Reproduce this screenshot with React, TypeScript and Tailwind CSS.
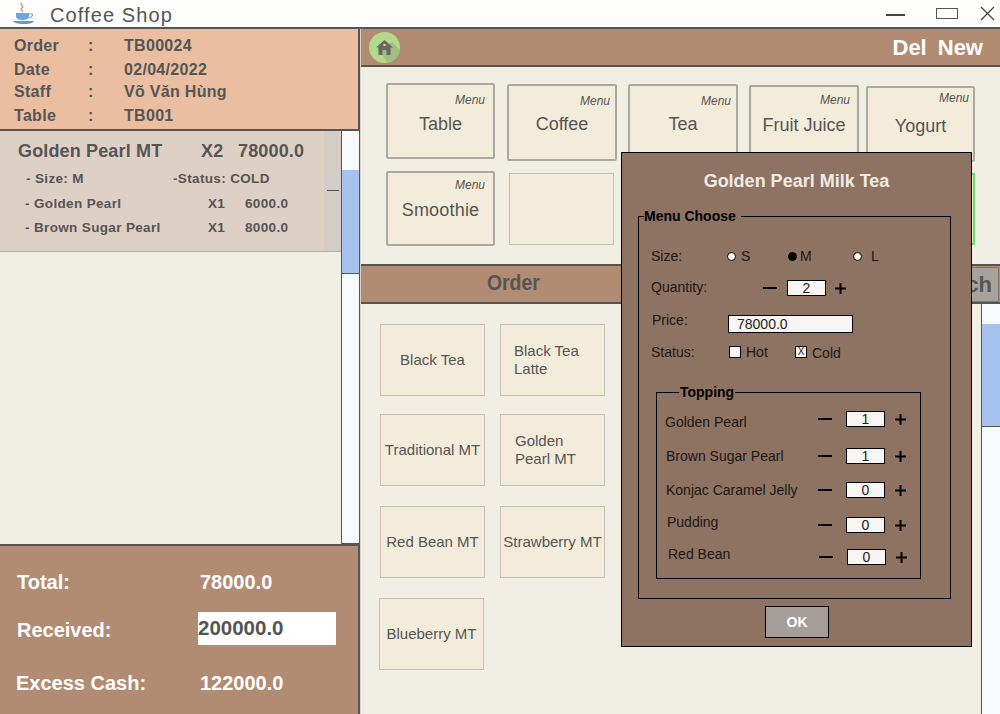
import React from "react";

const font = { fontFamily: '"Liberation Sans", Arial, sans-serif' };

const menuButtons = [
  { name: "Table", cls: "w-[109px] h-[76px] mt-0 ml-0", menu: "pt-[8px] pr-[8px]", text: "mt-[3px]" },
  { name: "Coffee", cls: "w-[110px] h-[77px] mt-[1px] ml-[12px]", menu: "pt-[8px] pr-[5px]", text: "mt-[2px]" },
  { name: "Tea", cls: "w-[110px] h-[77px] mt-[1px] ml-[11px]", menu: "pt-[8px] pr-[5px]", text: "mt-[2px]" },
  { name: "Fruit Juice", cls: "w-[110px] h-[77px] mt-[2px] ml-[11px]", menu: "pt-[6px] pr-[7px]", text: "mt-[4px]" },
  { name: "Yogurt", cls: "w-[109px] h-[76px] mt-[3px] ml-[7px]", menu: "pt-[3px] pr-[4px]", text: "mt-[7px]" },
];

const products = [
  [
    { a: "Black Tea", cls: "items-center justify-center" },
    { a: "Black Tea", b: "Latte", cls: "flex-col justify-center pl-[13px]" },
  ],
  [
    { a: "Traditional MT", cls: "items-center justify-center" },
    { a: "Golden", b: "Pearl MT", cls: "flex-col justify-center pl-[14px]" },
  ],
  [
    { a: "Red Bean MT", cls: "items-center justify-center" },
    { a: "Strawberry MT", cls: "items-center justify-center" },
  ],
];

const rowGaps = ["mt-[18px]", "mt-[20px]"];

const orderInfo = [
  { label: "Order", value: "TB00024", cls: "" },
  { label: "Date", value: "02/04/2022", cls: "mt-px" },
  { label: "Staff", value: "Võ Văn Hùng", cls: "-mt-px" },
  { label: "Table", value: "TB001", cls: "mt-px" },
];

const toppings = [
  { name: "Golden Pearl", qty: "1", cls: "mt-[11px]", label: "pl-[8px] mt-[6px]" },
  { name: "Brown Sugar Pearl", qty: "1", cls: "mt-[21px]", label: "pl-[9px]" },
  { name: "Konjac Caramel Jelly", qty: "0", cls: "mt-[18px]", label: "pl-[9px]" },
  { name: "Pudding", qty: "0", cls: "mt-[19px]", label: "pl-[10px] mb-[6px]" },
  { name: "Red Bean", qty: "0", cls: "mt-[16px] -mr-px", label: "pl-[11px] mb-[6px]" },
];

function CoffeeIcon() {
  return (
    <svg width="24" height="24" viewBox="0 0 24 24" className="ml-[11px] mt-[1px]">
      <path d="M11 1c-3 2 3 3 0 5s2 3 0 4" fill="none" stroke="#d9a0a0" strokeWidth="1.6" />
      <path d="M5 11h13v3c0 3-3 4-6.500 4S5 17 5 14z" fill="#6ea5de" />
      <path d="M18 12h3c1 0 1 3-3 4" fill="none" stroke="#6ea5de" strokeWidth="1.200" />
      <path d="M2 19h21c-1 2-4 3-10 3S3 21 2 19z" fill="#5a9ae0" />
    </svg>
  );
}

function HomeIcon() {
  return (
    <svg width="31" height="31" viewBox="0 0 31 31" className="ml-[8px]">
      <circle cx="15.500" cy="15.500" r="15.500" fill="#b5d98b" />
      <path d="M8 17l11 14a15.500 15.500 0 0 0 12-13L23 10z" fill="#a3bf80" />
      <path d="M15.500 8L7 15.500h2.500V23h4v-5h4v5h4v-7.500H24z" fill="#666666" />
      <circle cx="15.500" cy="13" r="1.300" fill="#f2d64b" />
    </svg>
  );
}

function Stepper({ value, inputGap = "ml-[14px]", plusGap = "ml-[9px]" }: { value: string; inputGap?: string; plusGap?: string }) {
  return (
    <div className="flex items-center">
      <div className="w-[14px] h-[2px] bg-black" />
      <div className={`w-[39px] h-[16px] ${inputGap} bg-[#f7f6f4] border border-black flex items-center justify-center text-[14px] text-[#222]`}>
        {value}
      </div>
      <svg width="13" height="13" viewBox="0 0 13 13" className={plusGap}>
        <path d="M6.500 1v11M1 6.500h11" stroke="#000" strokeWidth="2" />
      </svg>
    </div>
  );
}

function Radio({ label, on, gap, width }: { label: string; on?: boolean; gap: string; width: string }) {
  return (
    <div className={`flex items-center ${width}`}>
      <div className={`w-[9px] h-[9px] rounded-full border border-black ${on ? "bg-black" : "bg-white"}`} />
      <span className={gap}>{label}</span>
    </div>
  );
}

export default function App() {
  return (
    <div style={font} className="w-[1000px] h-[714px] overflow-hidden relative bg-[#f1efe4] flex flex-col text-[#555]">
      {/* title bar */}
      <div className="h-[27px] shrink-0 bg-[#fdfdfb] flex items-center">
        <CoffeeIcon />
        <span className="ml-[15px] mt-[3px] text-[20px] tracking-[1.1px] text-[#555]">Coffee Shop</span>
        <div className="ml-auto flex items-center">
          <div className="w-[19px] h-[2px] bg-[#444] mt-[3px]" />
          <div className="ml-[31px] w-[22px] h-[11px] border border-[#555]" />
          <svg width="15" height="15" viewBox="0 0 15 15" className="ml-[22px] mr-[5px]">
            <path d="M1 1l13 13M14 1L1 14" stroke="#444" strokeWidth="1.300" />
          </svg>
        </div>
      </div>

      <div className="flex flex-1 min-h-0 border-t-[2px] border-[#555]">
        {/* left column */}
        <div className="w-[360px] shrink-0 flex flex-col">
          <div className="h-[102px] shrink-0 bg-[#ecbea1] border-r-[2px] border-b-[2px] border-[#555] pl-[14px] pt-[5px] text-[16px] font-bold leading-[23px]">
            {orderInfo.map((r) => (
              <div key={r.label} className={`grid grid-cols-[74px_36px_1fr] tracking-[0.3px] ${r.cls}`}>
                <span>{r.label}</span>
                <span>:</span>
                <span>{r.value}</span>
              </div>
            ))}
          </div>

          <div className="flex-1 min-h-0 flex">
            <div className="w-[341px] h-full">
              <div className="h-[121px] bg-[#dfd0c5] border-b border-[#bdaea4] flex">
                <div className="w-[324px] font-bold">
                  <div className="flex text-[18px] pl-[18px] pt-[9px] leading-[22px] tracking-[0.15px]">
                    <span className="w-[183px]">Golden Pearl MT</span>
                    <span className="w-[37px]">X2</span>
                    <span>78000.0</span>
                  </div>
                  <div className="text-[13.500px] tracking-[0.35px] leading-[24.500px] mt-[5px]">
                    <div className="flex pl-[26px]">
                      <span className="w-[147px]">- Size: M</span>
                      <span>-Status: COLD</span>
                    </div>
                    <div className="flex pl-[25px]">
                      <span className="w-[183px]">- Golden Pearl</span>
                      <span className="w-[37px]">X1</span>
                      <span>6000.0</span>
                    </div>
                    <div className="flex pl-[25px]">
                      <span className="w-[183px]">- Brown Sugar Pearl</span>
                      <span className="w-[37px]">X1</span>
                      <span>8000.0</span>
                    </div>
                  </div>
                </div>
                <div className="w-[17px] bg-[#d5ccc5] flex justify-center pt-[59px]">
                  <div className="w-[12px] h-[1px] bg-[#555]" />
                </div>
              </div>
            </div>
            <div className="w-[19px] h-full bg-[#f7fafa] border-l border-r border-b border-[#555] pt-[39px]">
              <div className="h-[104px] bg-[#a6c3f0] border-b border-[#555]" />
            </div>
          </div>

          <div className="h-[170px] shrink-0 bg-[#b18b72] border-t-[2px] border-r-[2px] border-[#555] text-white font-bold text-[20px]">
            <div className="flex items-center pl-[17px] pt-[23px] h-[48px]">
              <span className="w-[183px]">Total:</span>
              <span>78000.0</span>
            </div>
            <div className="flex items-center pl-[17px] mt-[18px] h-[33px]">
              <span className="w-[181px] pt-[3px]">Received:</span>
              <div className="w-[138px] h-[33px] bg-white text-[#555] flex items-center text-[20.500px]">200000.0</div>
            </div>
            <div className="flex items-center pl-[16px] mt-[22px] h-[32px]">
              <span className="w-[184px]">Excess Cash:</span>
              <span>122000.0</span>
            </div>
          </div>
        </div>

        {/* right column */}
        <div className="flex-1 min-w-0 flex flex-col border-l border-[#d8d6cc]">
          <div className="h-[38px] shrink-0 bg-[#b18b72] border-b-[2px] border-[#555] flex items-center text-white font-bold text-[22px]">
            <HomeIcon />
            <span className="ml-auto">Del</span>
            <span className="ml-[11px] mr-[17px]">New</span>
          </div>

          <div className="h-[197px] shrink-0 pl-[25px] pt-[16px]">
            <div className="flex items-start">
              {menuButtons.map((b) => (
                <div key={b.name} className={`${b.cls} shrink-0 bg-[#f4ecda] border-[2px] border-[#a9a8a2] rounded-[2px] flex flex-col`}>
                  <span className={`self-end ${b.menu} text-[12px] italic leading-[14px]`}>Menu</span>
                  <span className={`${b.text} text-center text-[18px] leading-[22px] pt-[3px]`}>{b.name}</span>
                </div>
              ))}
            </div>
            <div className="flex items-start mt-[9px]">
              <div className="w-[109px] h-[75px] shrink-0 bg-[#f4ecda] border-[2px] border-[#a9a8a2] rounded-[2px] flex flex-col">
                <span className="self-end pr-[8px] pt-[5px] text-[12px] italic leading-[14px]">Menu</span>
                <span className="text-center text-[18px] leading-[22px] pt-[7px] tracking-[0.2px]">Smoothie</span>
              </div>
              <div className="w-[105px] h-[72px] ml-[14px] mt-[2px] shrink-0 bg-[#f4ecda] border border-[#c6c1b4]" />
              <div className="w-[105px] h-[72px] ml-[256px] mt-[2px] shrink-0 bg-[#f4ecda] border-[2px] border-[#5ee06a]" />
            </div>
          </div>

          <div className="h-[40px] shrink-0 bg-[#b18b72] border-t-[2px] border-b-[2px] border-[#555] flex items-center font-bold text-[22px]">
            <span className="ml-[126px] mb-[3px] inline-block origin-left scale-x-[0.88]">Order</span>
            <div className="ml-auto mr-[1px] w-[90px] h-[35px] bg-[#a8a29c] border border-[#777] flex items-center justify-end pr-[6px]">Search</div>
          </div>

          <div className="flex-1 min-h-0 flex">
            <div className="flex-1 pt-[20px] pl-[19px] text-[15px] leading-[18px]">
              {products.map((row, i) => (
                <div key={i} className={`flex gap-[15px] ${i > 0 ? rowGaps[i - 1] : ""}`}>
                  {row.map((p) => (
                    <div key={p.a + (p.b ?? "")} className={`w-[105px] h-[72px] bg-[#f4ecda] border border-[#c6c1b4] flex ${p.cls}`}>
                      <span className="whitespace-nowrap">{p.a}</span>
                      {p.b && <span className="whitespace-nowrap">{p.b}</span>}
                    </div>
                  ))}
                </div>
              ))}
              <div className="w-[105px] h-[72px] mt-[20px] -ml-[1px] bg-[#f4ecda] border border-[#c6c1b4] flex items-center justify-center">
                Blueberry MT
              </div>
            </div>
            <div className="w-[19px] h-full bg-[#f7fafa] border-l border-[#555] pt-[20px]">
              <div className="h-[103px] bg-[#a6c3f0] border-b border-[#555]" />
            </div>
          </div>
        </div>
      </div>

      {/* topping dialog */}
      <div className="absolute left-[621px] top-[152px] w-[351px] h-[495px] bg-[#8f7362] border border-black px-[16px] text-[14px] text-[#1c1713]">
        <div className="text-center font-bold text-[18px] text-[#f0ebe6] pt-[18px] leading-[20px]">Golden Pearl Milk Tea</div>
        <fieldset className="mt-[18px] w-[313px] h-[390px] border border-black pl-[12px]">
          <legend className="-ml-[7px] pr-[5px] font-bold text-[14px] leading-[15px] text-black">Menu Choose</legend>
          <div className="flex items-center h-[15px] mt-[25px]">
            <span className="w-[76px]">Size:</span>
            <Radio label="S" gap="ml-[5px]" width="w-[61px]" />
            <Radio label="M" on gap="ml-[3px]" width="w-[65px]" />
            <Radio label="L" gap="ml-[9px]" width="w-[40px]" />
          </div>
          <div className="flex items-center h-[16px] mt-[16px]">
            <span className="w-[112px] mb-[2px]">Quantity:</span>
            <Stepper value="2" inputGap="ml-[10px]" plusGap="ml-[8px]" />
          </div>
          <div className="flex items-center h-[18px] mt-[19px]">
            <span className="w-[77px] pl-[1px] mb-[8px]">Price:</span>
            <div className="w-[125px] h-[18px] bg-[#f7f6f4] border border-black flex items-center pl-[8px] text-[#222]">78000.0</div>
          </div>
          <div className="flex items-center h-[14px] mt-[12px]">
            <span className="w-[78px]">Status:</span>
            <div className="w-[12px] h-[12px] bg-[#f7f6f4] border border-black" />
            <span className="ml-[5px] w-[49px] pt-px">Hot</span>
            <div className="w-[12px] h-[12px] bg-[#f7f6f4] border border-black flex items-center justify-center text-[10px] leading-none">X</div>
            <span className="ml-[5px] pt-[2px]">Cold</span>
          </div>
          <fieldset className="ml-[5px] mt-[26px] w-[265px] h-[194px] border border-black pr-[13px]">
            <legend className="ml-[22px] px-[1px] font-bold text-[14px] leading-[15px] text-black">Topping</legend>
            {toppings.map((t) => (
              <div key={t.name} className={`flex items-center justify-between h-[16px] ${t.cls}`}>
                <span className={t.label}>{t.name}</span>
                <Stepper value={t.qty} />
              </div>
            ))}
          </fieldset>
        </fieldset>
        <div className="flex justify-center mt-[7px]">
          <div className="w-[64px] h-[32px] ml-[1px] bg-[#a59d98] border border-black flex items-center justify-center text-white font-bold text-[14px]">OK</div>
        </div>
      </div>
    </div>
  );
}
